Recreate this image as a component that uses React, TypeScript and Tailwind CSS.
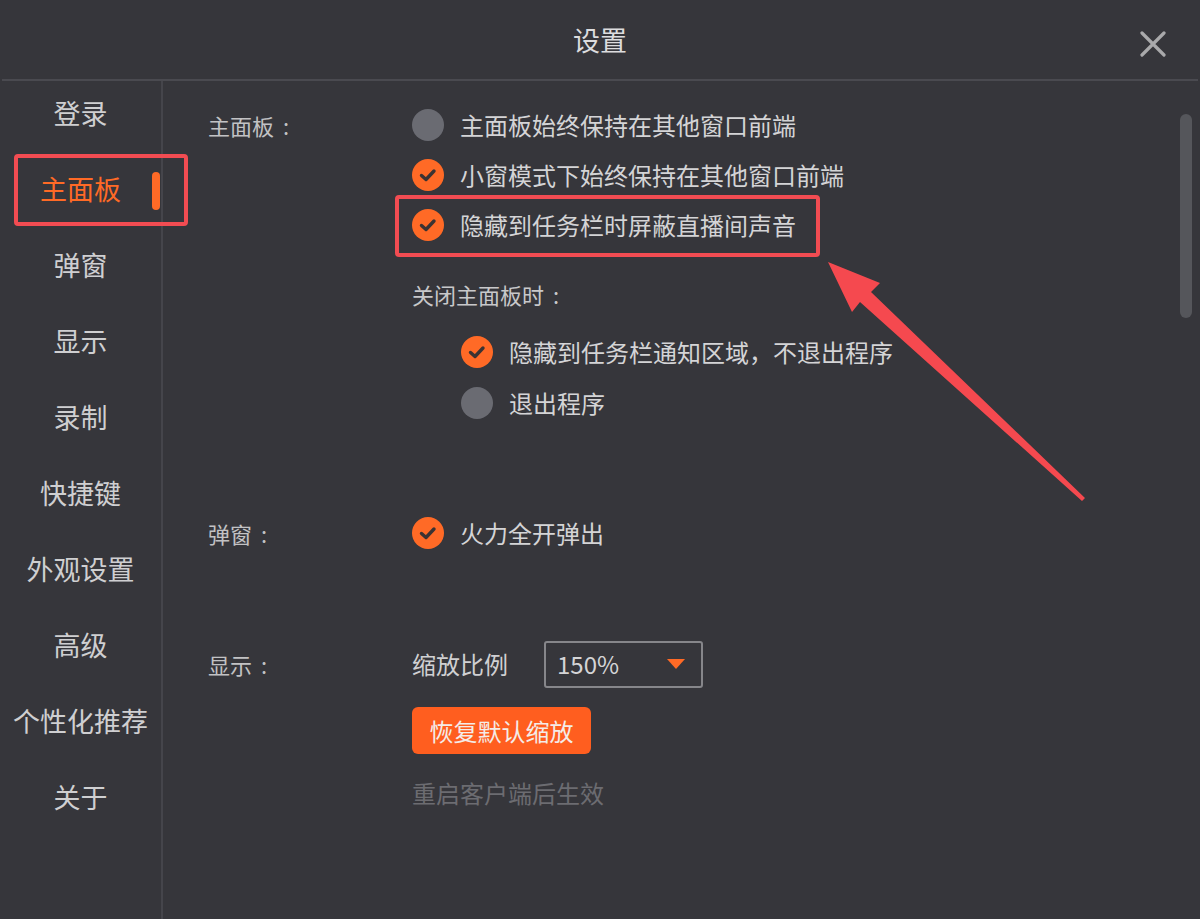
const navItems = ["登录", "主面板", "弹窗", "显示", "录制", "快捷键", "外观设置", "高级", "个性化推荐", "关于"];

function Radio({ checked }: { checked: boolean }) {
  if (!checked) {
    return <span className="block h-[32px] w-[32px] shrink-0 rounded-full bg-[#6a6b72]" />;
  }
  return (
    <svg viewBox="0 0 32 32" className="h-[32px] w-[32px] shrink-0">
      <circle cx="16" cy="16" r="16" fill="#ff6a26" />
      <path d="M9.5 16.5 L14 20.5 L22 12" fill="none" stroke="#3a3333" strokeWidth="3.4" strokeLinecap="round" strokeLinejoin="round" />
    </svg>
  );
}

function Option({ checked, label, className = "" }: { checked: boolean; label: string; className?: string }) {
  return (
    <div className={"flex h-[50px] items-center gap-[16px] " + className}>
      <Radio checked={checked} />
      <span className="text-[24px] leading-none text-[#d4d4d6]">{label}</span>
    </div>
  );
}

function Label({ text, className = "" }: { text: string; className?: string }) {
  return (
    <div className={"flex items-center text-[22px] leading-none text-[#c2c2c4] " + className}>
      {text}
      <span className="ml-[9px]">:</span>
    </div>
  );
}

export default function App() {
  return (
    <div
      className="relative flex h-[919px] w-[1200px] flex-col overflow-hidden bg-[#36363b] text-[#d4d4d6]"
      style={{ fontFamily: '"Noto Sans CJK SC", "Noto Sans", sans-serif' }}
    >
      {/* title bar */}
      <header className="relative mx-[2px] flex h-[81px] shrink-0 items-center justify-center border-b-2 border-[#4a4a50]">
        <h1 className="text-[27px] font-normal leading-none text-[#dcdcde]">设置</h1>
        <svg viewBox="0 0 26 26" className="absolute right-[32px] top-[31px] h-[26px] w-[26px]">
          <path d="M2 2 L24 24 M24 2 L2 24" stroke="#a9a9ab" strokeWidth="3.2" strokeLinecap="round" />
        </svg>
      </header>

      <div className="flex min-h-0 flex-1">
        {/* sidebar */}
        <nav className="w-[163px] shrink-0 border-r-2 border-[#45454b]">
          <div className="-mt-[7px] flex flex-col">
            {navItems.map((item) => {
              const active = item === "主面板";
              return (
                <div key={item} className="relative flex h-[76px] items-center justify-center">
                  <span className={"text-[27px] leading-none " + (active ? "text-[#ff6a26]" : "text-[#cfcfd1]")}>{item}</span>
                  {active ? (
                    <span className="absolute right-[1px] top-[22px] h-[38px] w-[8px] rounded-full bg-[#ff6a26]" />
                  ) : null}
                </div>
              );
            })}
          </div>
        </nav>

        {/* content */}
        <main className="relative flex-1 pl-[45px] pt-[19px]">
          <section className="flex">
            <Label text="主面板" className="h-[50px] w-[204px] shrink-0" />
            <div className="flex flex-col">
              <Option checked={false} label="主面板始终保持在其他窗口前端" />
              <Option checked label="小窗模式下始终保持在其他窗口前端" />
              <Option checked label="隐藏到任务栏时屏蔽直播间声音" />
              <Label text="关闭主面板时" className="mt-[19px] h-[50px] text-[#c8c8ca]" />
              <div className="mt-[7px] pl-[49px]">
                <Option checked label="隐藏到任务栏通知区域，不退出程序" className="h-[51px]" />
                <Option checked={false} label="退出程序" className="h-[51px]" />
              </div>
            </div>
          </section>

          <section className="mt-[80px] flex">
            <Label text="弹窗" className="h-[50px] w-[204px] shrink-0" />
            <Option checked label="火力全开弹出" />
          </section>

          <section className="mt-[82px] flex">
            <Label text="显示" className="h-[48px] w-[204px] shrink-0" />
            <div className="flex flex-col">
              <div className="flex h-[48px] items-center">
                <span className="text-[24px] leading-none text-[#d0d0d2]">缩放比例</span>
                <div className="ml-[36px] flex h-[47px] w-[159px] items-center justify-between rounded-[3px] border-2 border-[#86868a] pl-[11px] pr-[16px]">
                  <span className="text-[24px] leading-none text-[#d4d4d6]">150%</span>
                  <svg viewBox="0 0 18 10" className="h-[10px] w-[18px]">
                    <path d="M0 0 H18 L9 10 Z" fill="#ff6a26" />
                  </svg>
                </div>
              </div>
              <button
                type="button"
                className="mt-[19px] flex h-[47px] w-[179px] items-center justify-center rounded-[6px] bg-[#ff5e1f] text-[24px] leading-none text-[#f4ece8]"
              >
                恢复默认缩放
              </button>
              <div className="mt-[14px] flex h-[50px] items-center text-[24px] leading-none text-[#6c6c71]">重启客户端后生效</div>
            </div>
          </section>

          {/* scrollbar */}
          <div className="absolute right-[8px] top-[33px] h-[204px] w-[12px] rounded-full bg-[#55565b]" />
        </main>
      </div>

      {/* annotations */}
      <div className="pointer-events-none absolute left-[14px] top-[154px] h-[72px] w-[174px] rounded-[4px] border-[4px] border-[#f24c52]" />
      <div className="pointer-events-none absolute left-[395px] top-[195px] h-[62px] w-[425px] rounded-[4px] border-[4px] border-[#f24c52]" />
      <svg className="pointer-events-none absolute left-0 top-0 h-[919px] w-[1200px]" viewBox="0 0 1200 919">
        <polygon points="828,262 880,283 871,292 1085,498 1082,501 860,302 852,312" fill="#f5494f" />
      </svg>
    </div>
  );
}
